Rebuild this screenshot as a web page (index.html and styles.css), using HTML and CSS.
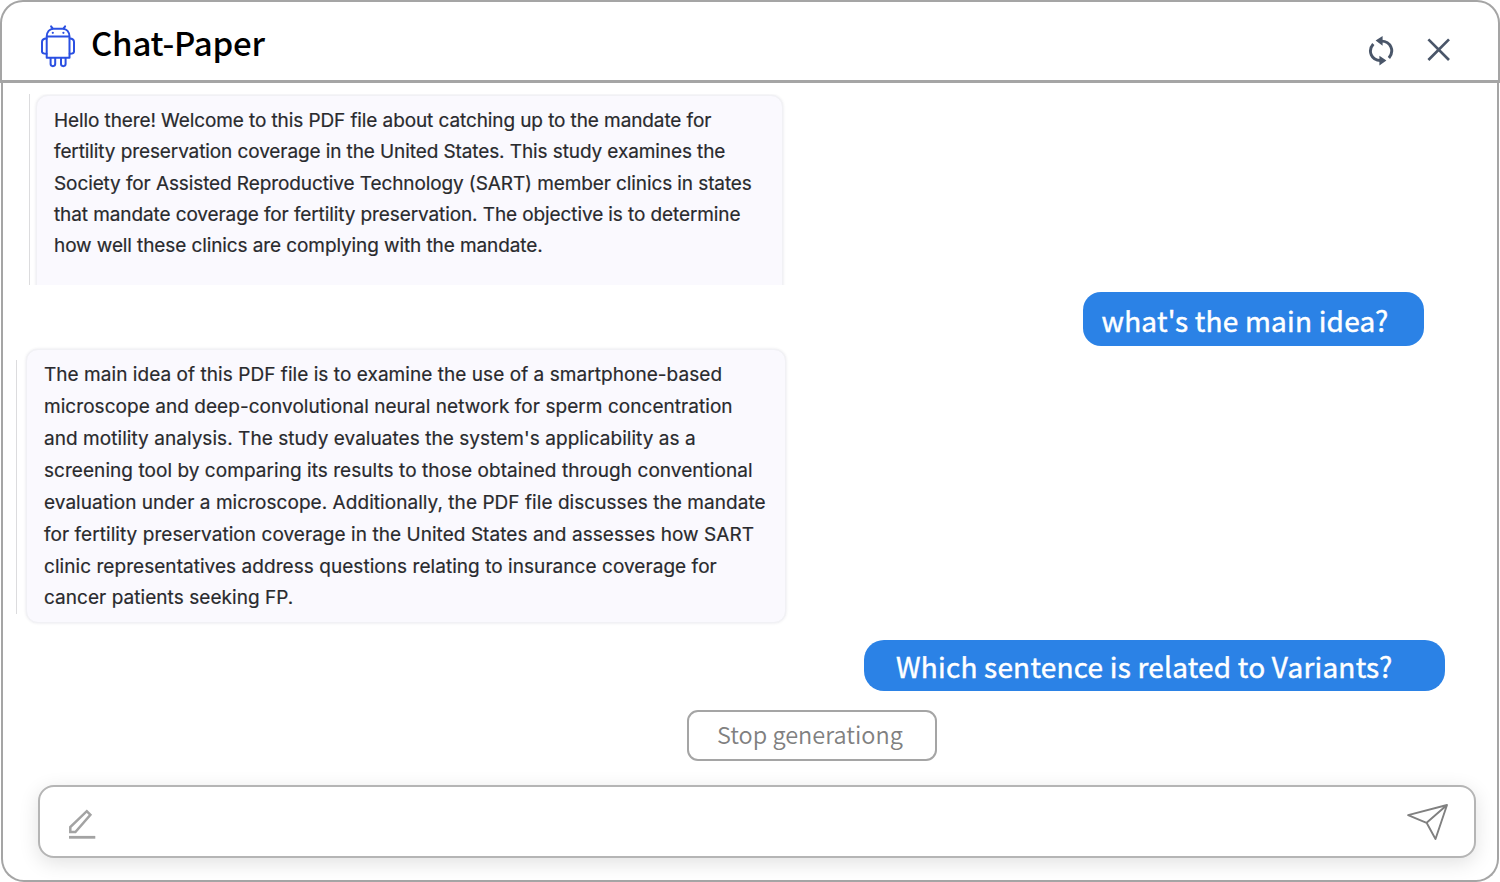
FILE: index.html
```html
<!DOCTYPE html>
<html lang="en">
<head>
<meta charset="utf-8">
<title>Chat-Paper</title>
<link rel="stylesheet" href="styles.css">
</head>
<body>
<div class="window">
  <header class="header">
    <svg class="robot" width="36" height="44" viewBox="0 0 36 44" fill="none" stroke="#2b50e2" stroke-width="2" stroke-linejoin="round" stroke-linecap="round">
      <path d="M6.700 12.500h22.800v21.300H6.700zM6.700 12.500C6.900 7.900 9.500 4.700 13.500 4.700h9.200c4 0 6.600 3.200 6.800 7.800M12.500 4.400l-1.400-2M23.700 4.400l1.400-2"/>
      <path d="M6.500 14.400c-3 0-4.500 1.300-4.500 3.500v9.600c0 1.500 1.300 2.300 4.500 2.300M29.700 14.400c3 0 4.300 1.300 4.300 3.500v9.600c0 1.500-1.200 2.300-4.300 2.300"/>
      <path d="M10.600 34v6.100c0 2.700 4.600 2.700 4.600 0V34M21 34v6.100c0 2.700 4.600 2.700 4.600 0V34"/>
      <g fill="#2b50e2" stroke="none"><circle cx="12.800" cy="8.800" r="1.100"/><circle cx="23.400" cy="8.800" r="1.100"/></g>
    </svg>
    <h1 class="title">Chat-Paper</h1>
    <div class="actions">
      <svg class="refresh" width="26" height="30" viewBox="0 0 26 30" fill="none" stroke="#4a5669" stroke-width="2.900">
        <path d="M13.500 5.100C22.500 5.300 27 14.500 20.900 22M12.500 24.500C3.500 24.300 -.700 15 5.300 8"/>
        <path d="M7.600 4.600L14.600 0v9.800zM18.400 24.500L11.400 19.800v9.800z" fill="#4a5669" stroke="none"/>
      </svg>
      <svg class="close" width="24" height="24" viewBox="0 0 24 24" fill="none" stroke="#4a5669" stroke-width="2.700"><path d="M1.400 1.400l20.600 20.600M22 1.400L1.400 22"/></svg>
    </div>
  </header>
  <main class="chat">
    <section class="reply reply-first">
      <div class="card card-cut">
        <p class="text text-first">Hello there! Welcome to this PDF file about catching up to the mandate for<br>fertility preservation coverage in the United States. This study examines the<br>Society for Assisted Reproductive Technology (SART) member clinics in states<br>that mandate coverage for fertility preservation. The objective is to determine<br>how well these clinics are complying with the mandate.</p>
      </div>
    </section>
    <div class="question question-first">what's the main idea?</div>
    <section class="reply reply-second">
      <div class="card">
        <p class="text text-second">The main idea of this PDF file is to examine the use of a smartphone-based<br>microscope and deep-convolutional neural network for sperm concentration<br>and motility analysis. The study evaluates the system's applicability as a<br>screening tool by comparing its results to those obtained through conventional<br>evaluation under a microscope. Additionally, the PDF file discusses the mandate<br>for fertility preservation coverage in the United States and assesses how SART<br>clinic representatives address questions relating to insurance coverage for<br>cancer patients seeking FP.</p>
      </div>
    </section>
    <div class="question question-second">Which sentence is related to Variants?</div>
    <button class="stop">Stop generationg</button>
    <div class="composer">
      <svg class="pen" width="28" height="30" viewBox="0 0 28 30" fill="none" stroke="#a3a3a3" stroke-width="2.500"><path d="M2.300 23v-5L18.800 2.200l3.600 3.600L7.400 23z"/><path d="M1 28.300h26.300" stroke-width="2.800"/></svg>
      <svg class="send" width="42" height="38" viewBox="0 0 42 38" fill="none" stroke="#808080" stroke-width="1.900" stroke-linejoin="round"><path d="M2.100 12.200L41 2 29.500 36 20.600 19.800zM20.600 19.800L41 2"/></svg>
    </div>
  </main>
</div>
</body>
</html>
```
FILE: styles.css
```css
* { box-sizing: border-box; }
body { margin: 0; background: #fff; }
.window { width: 1500px; height: 882px; display: flex; flex-direction: column; font-family: "Noto Sans CJK SC", sans-serif; }
.header { height: 83px; flex: none; display: flex; align-items: flex-start; border: 2px solid #a5a5a5; border-bottom-width: 3px; border-radius: 23px 23px 0 0; padding: 0 47px 0 38px; }
.robot { margin-top: 22px; }
.title { margin: 15px 0 0 15px; font-size: 33px; line-height: 50px; letter-spacing: -.2px; font-weight: 500; color: #000; white-space: nowrap; }
.actions { margin-left: auto; display: flex; align-items: flex-start; gap: 33px; padding-top: 34px; }
.close { margin-top: 2px; }
.chat { flex: 1; display: flex; flex-direction: column; margin: 0 1px; border: 2px solid #a5a5a5; border-top: 0; border-radius: 0 0 23px 23px; }
.reply { border-left: 1px solid #dcdcde; flex: none; }
.reply-first { width: 758px; height: 191px; margin: 11px 0 0 26px; padding: 1px 4px 0 6px; overflow: hidden; }
.reply-second { width: 770px; height: 254px; margin: 14px 0 0 13px; padding-left: 9px; }
.card { background: #faf9fe; border: 1px solid #f1f1f5; border-radius: 12px; box-shadow: 0 0 3px rgba(40,40,70,.12); }
.card-cut { height: 220px; padding: 9px 0 0 17px; }
.reply-second .card { height: 274px; margin-top: -11px; padding: 9.400px 0 0 17px; }
.text { margin: 0; font-family: Inter, sans-serif; color: #292a2d; white-space: nowrap; -webkit-text-stroke: .2px #292a2d; }
.text-first { font-size: 19px; line-height: 31.25px; letter-spacing: -.1px; }
.text-second { font-size: 19px; line-height: 31.86px; letter-spacing: .05px; }
.question { flex: none; align-self: flex-end; background: #2b82e6; color: #fff; font-weight: 400; font-size: 28px; white-space: nowrap; -webkit-text-stroke: .45px #fff; }
.question-first { width: 341px; height: 54px; margin: 7px 73px 0 0; padding: 0 0 0 18.500px; border-radius: 18px; line-height: 57px; letter-spacing: .2px; }
.question-second { width: 581px; height: 51px; margin: 26px 52px 0 0; padding-left: 32px; border-radius: 20px; line-height: 53px; letter-spacing: .21px; }
.stop { flex: none; width: 250px; height: 51px; margin: 19px 0 0 684px; padding: 0 0 3px 28px; text-align: left; border: 2px solid #a5a5a5; border-radius: 11px; background: #fff; color: #808080; font: 350 23.5px/44px "Noto Sans CJK SC", sans-serif; letter-spacing: 0; white-space: nowrap; }
.composer { flex: none; width: 1438px; height: 73px; margin: 24px 0 0 35px; border: 2px solid #b5b5b5; border-radius: 16px; background: #fff; box-shadow: 0 5px 20px rgba(0,0,0,.12); display: flex; justify-content: space-between; padding: 0 26px 0 28px; }
.pen { margin-top: 22px; }
.send { margin-top: 16px; }
```
